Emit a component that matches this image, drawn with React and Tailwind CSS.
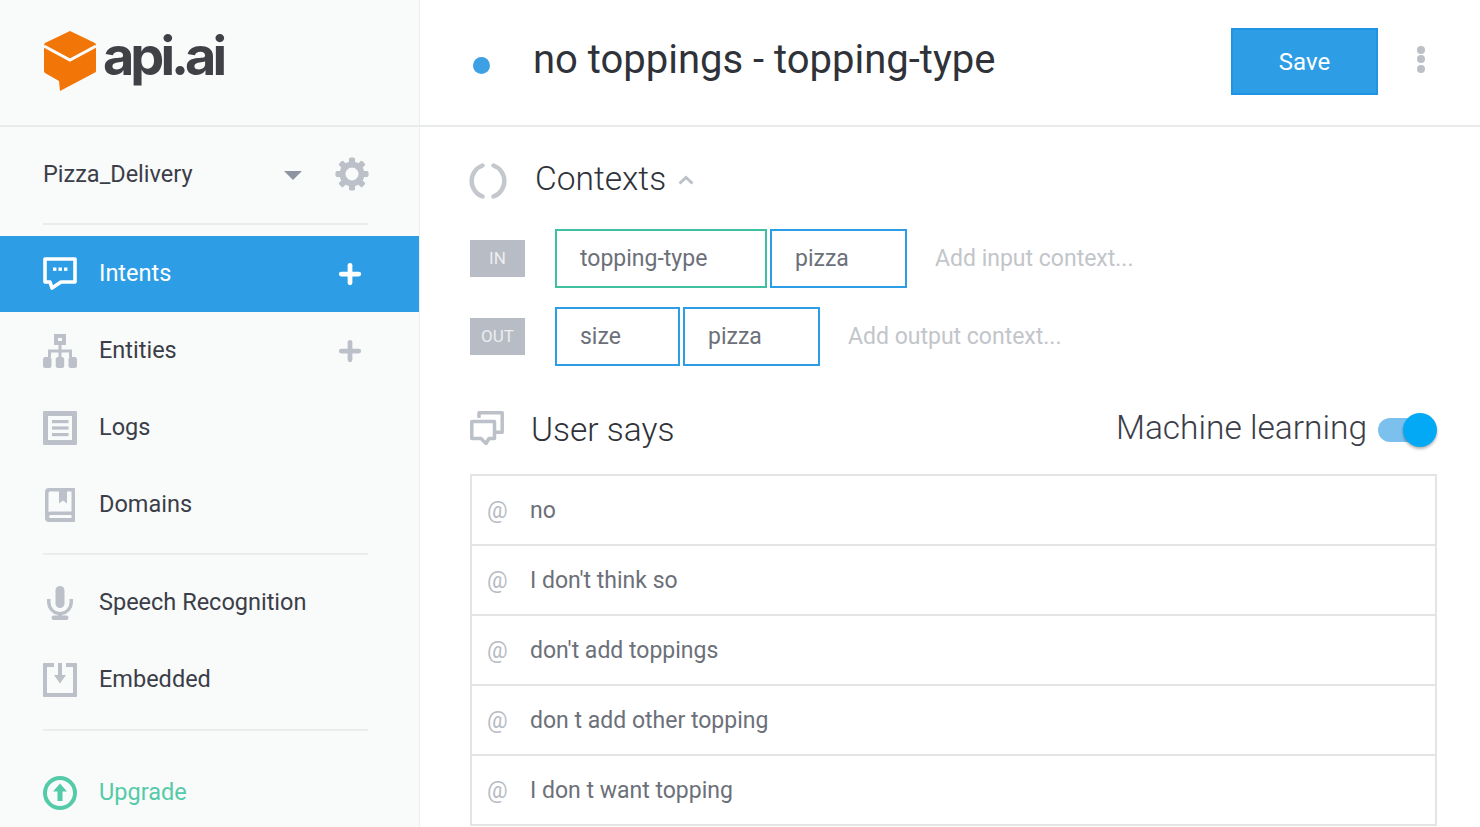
import { Plus } from 'lucide-react';

const GRAY = '#bcc0c8';

function LogoMark() {
  return (
    <svg width="52" height="62" viewBox="0 0 52 62" className="shrink-0">
      <path
        d="M26 1 L51 13 Q52 14 52 15 L52 41 Q52 42 51 42.500 L16 61 L15 51 L1 43 Q0 42 0 41 L0 15 Q0 14 1 13 Z"
        fill="#f27507"
      />
      <path d="M0 16 L26 30 L52 16" fill="none" stroke="#f9fafa" strokeWidth="3" />
    </svg>
  );
}

function GearIcon() {
  const teeth = [0, 45, 90, 135, 180, 225, 270, 315];
  return (
    <svg width="34" height="34" viewBox="0 0 34 34" className="mr-[-1px] mt-[-2px]">
      {teeth.map((deg) => (
        <rect key={deg} x="14" y="0.500" width="6" height="8" rx="1.500" fill={GRAY} transform={`rotate(${deg} 17 17)`} />
      ))}
      <circle cx="17" cy="17" r="9.500" fill="none" stroke={GRAY} strokeWidth="6" />
    </svg>
  );
}

function IntentsIcon() {
  return (
    <svg width="34" height="34" viewBox="0 0 34 34" fill="none">
      <path d="M2 2h30v23H18l-9 6-2-6H2z" stroke="#fff" strokeWidth="3.600" strokeLinejoin="round" />
      <rect x="10" y="10.500" width="3.400" height="3.400" fill="#fff" />
      <rect x="15.500" y="10.500" width="3.400" height="3.400" fill="#fff" />
      <rect x="21" y="10.500" width="3.400" height="3.400" fill="#fff" />
    </svg>
  );
}

function EntitiesIcon() {
  return (
    <svg width="34" height="34" viewBox="0 0 34 34" fill={GRAY}>
      <path fillRule="evenodd" d="M11 0h12v11h-12z M15 4v3h4v-3z" />
      <rect x="15.500" y="10" width="3" height="8" />
      <path d="M5 15.500h24v8h-3v-5h-7.500v5h-3v-5h-7.500v5h-3z" />
      <rect x="0" y="23" width="8.500" height="11" rx="2.500" />
      <rect x="12.700" y="23" width="8.500" height="11" rx="2.500" />
      <rect x="25.500" y="23" width="8.500" height="11" rx="2.500" />
    </svg>
  );
}

function LogsIcon() {
  return (
    <svg width="34" height="34" viewBox="0 0 34 34" fill={GRAY}>
      <path fillRule="evenodd" d="M1 0h32a1 1 0 0 1 1 1v32a1 1 0 0 1-1 1h-32a1 1 0 0 1-1-1v-32a1 1 0 0 1 1-1z M5 5v24h24v-24z" />
      <rect x="9" y="9" width="16.500" height="3.200" />
      <rect x="9" y="15.400" width="16.500" height="3.200" />
      <rect x="9" y="22" width="16.500" height="3.200" />
    </svg>
  );
}

function DomainsIcon() {
  return (
    <svg width="30" height="34" viewBox="0 0 30 34" fill={GRAY}>
      <path
        fillRule="evenodd"
        d="M4 0h25a1 1 0 0 1 1 1v32a1 1 0 0 1-1 1h-25a4 4 0 0 1-4-4v-26a4 4 0 0 1 4-4z M3.500 4.500v19.500a6 6 0 0 1 2-0.500h21v-20h-4.500v12l-4-3-4 3v-12h-7a3.500 3.500 0 0 0-3.500 1z M5.500 27a1 1 0 0 0 0 3h21v-3z"
      />
    </svg>
  );
}

function MicIcon() {
  return (
    <svg width="26" height="34" viewBox="0 0 26 34" fill={GRAY}>
      <rect x="8.500" y="0" width="9" height="22" rx="4.500" />
      <path d="M0 13h3.500v3.500a9.500 9.500 0 0 0 19 0v-3.500h3.500v3.500a13 13 0 0 1-11 12.500v1.500h-4v-1.500a13 13 0 0 1-11-12.500z" />
      <rect x="4.500" y="29.500" width="17" height="4.500" rx="2.200" />
    </svg>
  );
}

function EmbeddedIcon() {
  return (
    <svg width="34" height="34" viewBox="0 0 34 34" fill={GRAY}>
      <path d="M1 0h10v4h-7v26h26v-26h-7v-4h10a1 1 0 0 1 1 1v32a1 1 0 0 1-1 1h-32a1 1 0 0 1-1-1v-32a1 1 0 0 1 1-1z" />
      <path d="M15 0h4v12h4l-6 8.500-6-8.500h4z" />
    </svg>
  );
}

function UpgradeIcon() {
  return (
    <svg width="34" height="34" viewBox="0 0 34 34" fill="none">
      <circle cx="17" cy="17" r="15" stroke="#54cba8" strokeWidth="4" />
      <path d="M17 7.500l7 8h-4.500v9.500h-5v-9.500h-4.500z" fill="#54cba8" />
    </svg>
  );
}

function ContextsIcon() {
  return (
    <svg width="38" height="36" viewBox="0 0 38 36" fill="none" stroke="#c4c7cc" strokeWidth="4.500" strokeLinecap="round" className="mt-[2px] ml-[-1px]">
      <path d="M13.500 2.500A16.500 16.500 0 0 0 13.500 33.500" />
      <path d="M24.500 2.500A16.500 16.500 0 0 1 24.500 33.500" />
    </svg>
  );
}

function UserSaysIcon() {
  return (
    <svg width="34" height="34" viewBox="0 0 34 34" fill="none" stroke={GRAY} strokeWidth="3.500" strokeLinejoin="round" className="mt-[-4px]">
      <path d="M9 7V1.800h23.200v19.500H25" />
      <path d="M1.800 10.500h22.700v17h-5.500l-3 5-5-5h-9.200z" />
    </svg>
  );
}

function NavRow({ icon, label, add, active, className = '' }) {
  return (
    <div className={`flex items-center pl-[43px] pr-[54px] text-[23.500px] ${active ? 'h-[76px] bg-[#2d9ee6] text-white' : 'h-[77px] text-[#3b3e48]'} ${className}`}>
      <div className="flex w-[34px] justify-center">{icon}</div>
      <span className="ml-[22px] flex-1">{label}</span>
      {add && <Plus size={30} strokeWidth={3.800} color={active ? '#fff' : GRAY} />}
    </div>
  );
}

function Chip({ label, width, green }) {
  return (
    <div className={`flex h-[59px] items-center border-2 pl-[23px] pt-[2px] text-[23px] text-[#6c7079] ${green ? 'border-[#3fc0a0]' : 'border-[#2d9ee6]'}`} style={{ width }}>
      {label}
    </div>
  );
}

function ContextRow({ tag, chips, placeholder, className = '' }) {
  return (
    <div className={`flex items-center ${className}`}>
      <div className="flex h-[37px] w-[55px] items-center justify-center bg-[#b8bcc4] text-[17px] text-[#eceef0]">{tag}</div>
      <div className="ml-[30px] flex gap-[3px]">
        {chips.map((c) => (
          <Chip key={c.label} {...c} />
        ))}
      </div>
      <span className="ml-[28px] pt-[2px] text-[23px] text-[#c2c5ca]">{placeholder}</span>
    </div>
  );
}

const phrases = ['no', "I don't think so", "don't add toppings", 'don t add other topping', 'I don t want topping'];

export default function App() {
  return (
    <div className="flex h-[827px] w-[1480px] overflow-hidden bg-white font-['Roboto',sans-serif]">
      <aside className="flex w-[419px] shrink-0 flex-col bg-[#f9fafa]">
        <div className="flex h-[127px] items-start border-b-2 border-[#e9eaea] pl-[44px] pt-[30px]">
          <LogoMark />
          <span className="ml-[7px] mt-[-9px] font-['Inter',sans-serif] text-[54px] font-bold leading-[70px] tracking-[-4px] text-[#3f4146]">api.ai</span>
        </div>

        <div className="ml-[43px] mr-[51px] flex h-[98px] items-center border-b-2 border-[#ebecec] text-[23.500px] text-[#3b3e48]">
          <span className="flex-1">Pizza_Delivery</span>
          <div className="mr-[33px] h-0 w-0 border-x-[9px] border-t-[9px] border-x-transparent border-t-[#8f95a0]" />
          <GearIcon />
        </div>

        <NavRow active add label="Intents" icon={<IntentsIcon />} className="mt-[11px]" />
        <NavRow add label="Entities" icon={<EntitiesIcon />} />
        <NavRow label="Logs" icon={<LogsIcon />} />
        <NavRow label="Domains" icon={<DomainsIcon />} />

        <div className="ml-[43px] mr-[51px] mt-[10px] h-[2px] bg-[#ebecec]" />

        <NavRow label="Speech Recognition" icon={<MicIcon />} className="mt-[9px]" />
        <NavRow label="Embedded" icon={<EmbeddedIcon />} />

        <div className="ml-[43px] mr-[51px] mt-[11px] h-[2px] bg-[#ebecec]" />

        <div className="mt-[44px] flex items-center pl-[43px] text-[23.500px] text-[#54cba8]">
          <UpgradeIcon />
          <span className="ml-[22px]">Upgrade</span>
        </div>
      </aside>

      <main className="flex min-w-0 flex-1 flex-col border-l border-[#eceded]">
        <header className="flex h-[127px] shrink-0 items-center border-b-2 border-[#e9eaea] pl-[53px] pr-[55px]">
          <div className="mt-[5px] h-[17px] w-[17px] rounded-full bg-[#3d9fe4]" />
          <h1 className="ml-[43px] mt-[-6px] flex-1 text-[40px] text-[#2f3238]">no toppings - topping-type</h1>
          <button className="mr-[1px] mt-[-2px] flex h-[67px] w-[147px] items-center justify-center border-2 border-[#1f93e4] bg-[#2d9ee6] text-[24px] text-white">
            Save
          </button>
          <div className="ml-[38px] mt-[-7px] flex flex-col gap-[1.500px]">
            <span className="h-[8px] w-[8px] rounded-full bg-[#bcbfc6]" />
            <span className="h-[8px] w-[8px] rounded-full bg-[#bcbfc6]" />
            <span className="h-[8px] w-[8px] rounded-full bg-[#bcbfc6]" />
          </div>
        </header>

        <div className="pl-[50px] pr-[43px]">
          <div className="mt-[33px] flex h-[40px] items-center">
            <ContextsIcon />
            <span className="ml-[28px] mt-[-2px] text-[33.500px] font-light text-[#2f3238]">Contexts</span>
            <svg width="16" height="10" viewBox="0 0 16 10" fill="none" stroke={GRAY} strokeWidth="3" className="ml-[12px]">
              <path d="M1.500 8.500L8 2.500l6.500 6" />
            </svg>
          </div>

          <ContextRow
            className="mt-[29px]"
            tag="IN"
            chips={[
              { label: 'topping-type', width: 212, green: true },
              { label: 'pizza', width: 137 },
            ]}
            placeholder="Add input context..."
          />
          <ContextRow
            className="mt-[19px]"
            tag="OUT"
            chips={[
              { label: 'size', width: 125 },
              { label: 'pizza', width: 137 },
            ]}
            placeholder="Add output context..."
          />

          <div className="mt-[44px] flex h-[40px] items-center">
            <UserSaysIcon />
            <span className="ml-[27px] flex-1 text-[33.500px] font-light text-[#2f3238]">User says</span>
            <span className="mt-[-4px] text-[33.500px] font-light text-[#3b3e48]">Machine learning</span>
            <div className="relative ml-[11px] h-[24px] w-[59px]">
              <div className="absolute left-0 top-0 h-[24px] w-[50px] rounded-full bg-[#7cc0ee]" />
              <div className="absolute right-0 top-[-5px] h-[34px] w-[34px] rounded-full bg-[#03a9f4] shadow-[0_2px_3px_rgba(0,0,0,0.3)]" />
            </div>
          </div>

          <div className="mt-[24px] border-x-2 border-t-2 border-[#e3e4e4]">
            {phrases.map((p) => (
              <div key={p} className="flex h-[70px] items-center border-b-2 border-[#e3e4e4] pl-[15px] pt-[2px] text-[23px] text-[#6c7079]">
                <span className="w-[43px] text-[#b8bcc4]">@</span>
                <span>{p}</span>
              </div>
            ))}
          </div>
        </div>
      </main>
    </div>
  );
}
